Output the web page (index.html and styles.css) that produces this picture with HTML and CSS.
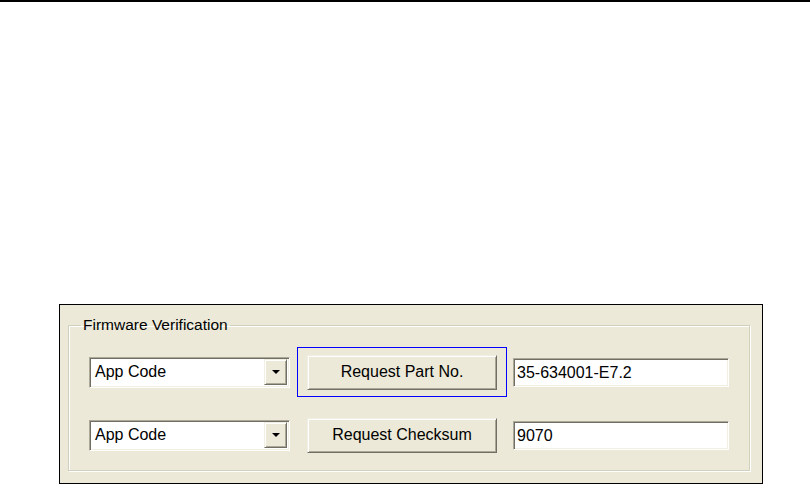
FILE: index.html
```html
<!DOCTYPE html>
<html>
<head>
<meta charset="utf-8">
<link rel="stylesheet" href="styles.css">
</head>
<body>
<div class="rule"></div>
<div class="panel">
  <fieldset class="group">
    <legend class="group-title">Firmware Verification</legend>
    <div class="row">
      <div class="combo">
        <span class="combo-text">App Code</span>
        <span class="combo-btn"><span class="arrow"></span></span>
      </div>
      <div class="focus focus-on">
        <div class="btn">Request Part No.</div>
      </div>
      <div class="field">35-634001-E7.2</div>
    </div>
    <div class="row">
      <div class="combo">
        <span class="combo-text">App Code</span>
        <span class="combo-btn"><span class="arrow"></span></span>
      </div>
      <div class="focus">
        <div class="btn">Request Checksum</div>
      </div>
      <div class="field">9070</div>
    </div>
  </fieldset>
</div>
</body>
</html>
```

FILE: styles.css
```css
html, body {
  margin: 0;
  padding: 0;
  background: #fff;
}
body {
  font-family: "Liberation Sans", Arial, sans-serif;
  font-size: 16px;
  color: #000;
}
.rule {
  height: 2px;
  background: #000;
}
.panel {
  margin: 302px 0 0 59px;
  width: 694px;
  border: 1px solid #000;
  background: #ECE9D8;
  padding: 11px 0 12px 8px;
}
.group {
  margin: 0;
  width: 682px;
  box-sizing: border-box;
  border: 1px solid #D0D0BF;
  box-shadow: inset 1px 1px 0 #fff, 1px 1px 0 #fff;
  padding: 13px 0 10px 20px;
  min-width: 0;
}
.group-title {
  font-size: 15.5px;
  line-height: 18px;
  padding: 0 2px;
  margin-left: -8px;
}
.row {
  display: flex;
  align-items: center;
  height: 50px;
}
.row + .row {
  margin-top: 13px;
}
.combo {
  width: 201px;
  height: 31px;
  box-sizing: border-box;
  background: #fff;
  border: 1px solid;
  border-color: #ACA899 #fff #fff #ACA899;
  box-shadow: inset 1px 1px 0 #716F64, inset -1px -1px 0 #F1EFE2;
  display: flex;
  align-items: center;
  padding: 2px 2px 2px 5px;
}
.combo-text {
  flex: 1;
  line-height: 20px;
}
.combo-btn {
  width: 23px;
  height: 26px;
  box-sizing: border-box;
  background: #ECE9D8;
  border: 1px solid;
  border-color: #F1EFE2 #716F64 #716F64 #F1EFE2;
  box-shadow: inset 1px 1px 0 #fff, inset -1px -1px 0 #ACA899;
  display: flex;
  align-items: center;
  justify-content: center;
}
.arrow {
  width: 0;
  height: 0;
  border-left: 4px solid transparent;
  border-right: 4px solid transparent;
  border-top: 4px solid #000;
}
.focus {
  margin-left: 7px;
  width: 210px;
  height: 50px;
  box-sizing: border-box;
  border: 1px solid transparent;
  padding: 7px 9px 6px;
}
.focus-on {
  border-color: #0000FF;
}
.btn {
  width: 190px;
  height: 35px;
  box-sizing: border-box;
  background: #ECE9D8;
  border: 1px solid;
  border-color: #F1EFE2 #716F64 #716F64 #F1EFE2;
  box-shadow: inset 1px 1px 0 #fff, inset -1px -1px 0 #ACA899;
  display: flex;
  align-items: center;
  justify-content: center;
  padding-bottom: 2px;
}
.field {
  margin-left: 6px;
  width: 216px;
  height: 29px;
  box-sizing: border-box;
  background: #fff;
  border: 1px solid;
  border-color: #ACA899 #fff #fff #ACA899;
  box-shadow: inset 1px 1px 0 #716F64, inset -1px -1px 0 #F1EFE2;
  padding: 2px 3px;
  line-height: 23px;
}
```
